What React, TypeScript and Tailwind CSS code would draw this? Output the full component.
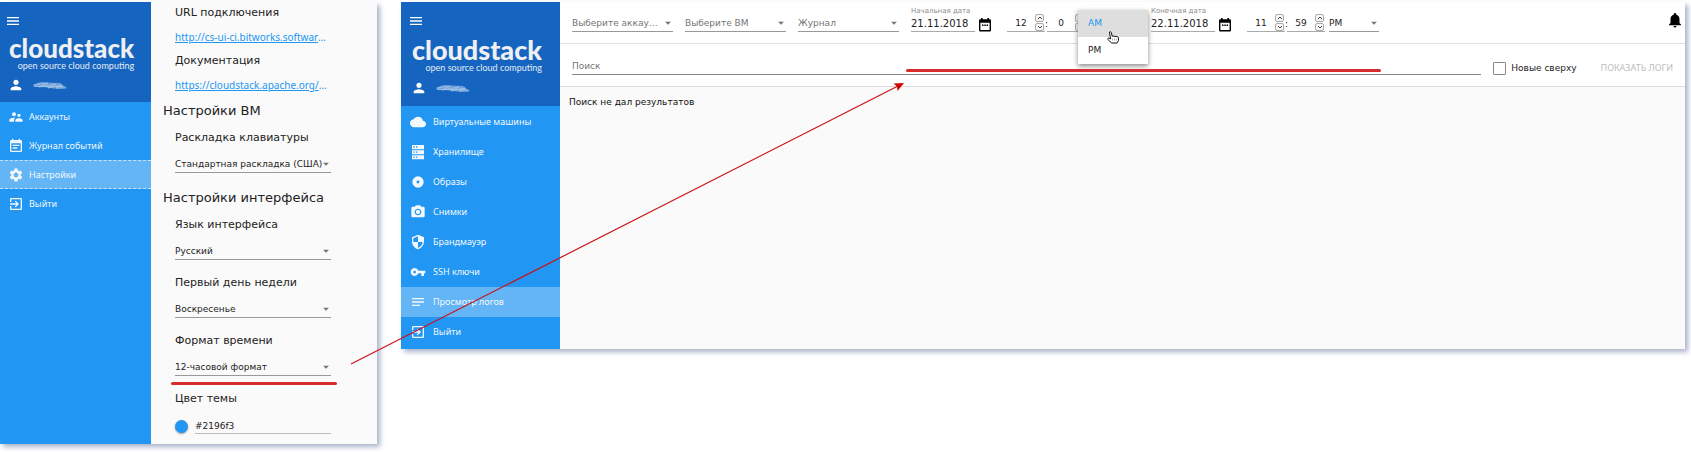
import React from "react";
import type { IconType } from "react-icons";
import {
  MdMenu,
  MdPerson,
  MdSupervisorAccount,
  MdEventNote,
  MdSettings,
  MdExitToApp,
  MdCloud,
  MdCameraAlt,
  MdSecurity,
  MdVpnKey,
  MdNotes,
  MdNotifications,
  MdArrowDropDown,
} from "react-icons/md";

type Glyph = IconType | React.FC<{ className?: string }>;

const ServerIcon: React.FC<{ className?: string }> = ({ className }) => (
  <svg viewBox="0 0 24 24" fill="currentColor" className={className} aria-hidden="true">
    <path
      fillRule="evenodd"
      d="M3 1.500h18V8H3zM3 9.300h18v6H3zM3 16.700h18v6H3zM5 3.500v2h2v-2zM9 3.500v2h2v-2zM5 11.200v2h2v-2zM9 11.200v2h2v-2zM5 18.700v2h2v-2zM9 18.700v2h2v-2z"
    />
  </svg>
);

const DiscIcon: React.FC<{ className?: string }> = ({ className }) => (
  <svg viewBox="0 0 24 24" fill="currentColor" className={className} aria-hidden="true">
    <path fillRule="evenodd" d="M12 3.500a8.500 8.500 0 1 0 0 17 8.500 8.500 0 0 0 0-17zM12 9.800a2.200 2.200 0 1 1 0 4.400 2.200 2.200 0 0 1 0-4.400z" />
  </svg>
);

const CalendarIcon: React.FC<{ className?: string }> = ({ className }) => (
  <svg viewBox="0 0 12 14" className={className} aria-hidden="true">
    <path
      fill="currentColor"
      fillRule="evenodd"
      d="M2 0h1.600v1.300h4.800V0H10v1.300h.8A1.200 1.200 0 0 1 12 2.500v9.800a1.200 1.200 0 0 1-1.200 1.200H1.200A1.200 1.200 0 0 1 0 12.300V2.500a1.200 1.200 0 0 1 1.200-1.200H2zM1.400 4.800v7.300h9.200V4.800zM3 6.600h1.500v1.500H3zM5.300 6.600h1.500v1.500H5.300zM7.600 6.600h1.500v1.500H7.600z"
    />
  </svg>
);

function Sidebar({
  items,
  active,
  wide,
}: {
  items: { label: string; icon: Glyph }[];
  active: string;
  wide?: boolean;
}) {
  return (
    <aside className={`flex shrink-0 flex-col bg-[#2196f3] text-white ${wide ? "w-[159px]" : "w-[151px]"}`}>
      <header className={`flex flex-col bg-[#1565c0] ${wide ? "h-[104px] px-[7px] pt-[11px]" : "h-[100px] px-[5px] pt-[11px]"}`}>
        <button type="button" aria-label="Меню" className="flex h-4 w-4 items-center justify-center">
          <MdMenu className="h-4 w-4" />
        </button>
        <div
          className={`flex w-fit flex-col items-end font-['Lato',sans-serif] ${wide ? "ml-1 mt-2" : "ml-1 mt-[6px]"}`}
        >
          <span className={`font-black leading-[26px] text-[#f0f0f2] ${wide ? "text-[27px]" : "text-[26px]"}`}>
            cloudstack
          </span>
          <span className="whitespace-nowrap text-[9px] leading-[9px] text-[#e3ebf6]">
            open source cloud computing
          </span>
        </div>
        <div className={`flex items-center gap-2 ${wide ? "mt-2 pl-[3px]" : "mt-[7px] pl-[3px]"}`}>
          <MdPerson className="h-4 w-4" />
          <svg viewBox="0 0 36 10" className="h-[10px] w-9" aria-hidden="true">
            <path d="M1 5 Q8 1 14 2.500 L28 3 L35 8 Q25 9.500 18 8 T2 7Z" fill="#8db3e0" opacity=".75" />
            <path d="M2 5l14-2-9 4 17-3-8 4 14-3-6 3 10 0M3 6.500h28" fill="none" stroke="#a9c6e8" strokeWidth=".7" />
          </svg>
        </div>
      </header>
      <nav className={wide ? "pb-[2px] pt-px" : ""}>
        {items.map(({ label, icon: Icon }) => (
          <a
            key={label}
            href="#"
            aria-current={label === active ? "page" : undefined}
            className={`flex items-center font-['Noto_Sans',sans-serif] text-[9px] text-[#f2f8fe] ${
              wide ? "h-[30px] gap-[7px] pl-[9px]" : "h-[29px] gap-[5px] pl-[8px]"
            } ${label === active ? "bg-[#64b5f6]" : ""} ${
              label === active && !wide ? "border-y border-dashed border-[#c5e2fb]" : ""
            }`}
          >
            <Icon className="h-4 w-4 shrink-0" />
            {label}
          </a>
        ))}
      </nav>
    </aside>
  );
}

function Select({
  label,
  value,
  options = [],
  className = "",
  inset = "pr-2",
}: {
  label: string;
  value: string;
  options?: string[];
  className?: string;
  inset?: string;
}) {
  return (
    <div className={`relative border-b border-[#999] ${className}`}>
      <select
        aria-label={label}
        defaultValue={value}
        className={`block h-[15px] w-full appearance-none truncate bg-transparent text-[9px] leading-[15px] outline-none ${inset}`}
      >
        {[value, ...options].map((option) => (
          <option key={option}>{option}</option>
        ))}
      </select>
      <MdArrowDropDown className="pointer-events-none absolute -right-[2px] top-0 h-[14px] w-[14px] text-[#757575]" />
    </div>
  );
}

function Field({ title, children }: { title: string; children: React.ReactNode }) {
  return (
    <section className="relative mb-3 ml-3 w-[156px] last:mb-[10px]">
      <h3 className="mb-2 whitespace-nowrap text-[11px] leading-[22px]">{title}</h3>
      {children}
    </section>
  );
}

function Link({ title, url }: { title: string; url: string }) {
  return (
    <section className="ml-3 w-[156px]">
      <h3 className="text-[11px] leading-[22px]">{title}</h3>
      <p className="truncate font-['Noto_Sans',sans-serif] text-[10px] leading-[26px] text-[#2196f3]">
        <a href={url} className="underline">
          {url}
        </a>
      </p>
    </section>
  );
}

function SettingsPanel() {
  return (
    <div className="flex w-[377px] shrink-0 bg-[#fafafa] shadow-[3px_3px_5px_#a9b3cb]">
      <Sidebar
        active="Настройки"
        items={[
          { label: "Аккаунты", icon: MdSupervisorAccount },
          { label: "Журнал событий", icon: MdEventNote },
          { label: "Настройки", icon: MdSettings },
          { label: "Выйти", icon: MdExitToApp },
        ]}
      />
      <main className="flex-1 pl-3">
        <Link title="URL подключения" url="http://cs-ui-ci.bitworks.software/client" />
        <Link title="Документация" url="https://cloudstack.apache.org/api" />
        <h2 className="mb-[3px] text-[13px] leading-[26px]">Настройки ВМ</h2>
        <Field title="Раскладка клавиатуры">
          <Select label="Раскладка клавиатуры" value="Стандартная раскладка (США)" />
        </Field>
        <h2 className="mb-[3px] text-[13px] leading-[26px]">Настройки интерфейса</h2>
        <Field title="Язык интерфейса">
          <Select label="Язык интерфейса" value="Русский" options={["English"]} />
        </Field>
        <Field title="Первый день недели">
          <Select label="Первый день недели" value="Воскресенье" options={["Понедельник"]} />
        </Field>
        <Field title="Формат времени">
          <Select label="Формат времени" value="12-часовой формат" options={["24-часовой формат"]} />
          <div className="absolute -bottom-[9px] -left-1 h-[3px] w-[166px] rounded-full bg-[#d82c2c]" />
        </Field>
        <Field title="Цвет темы">
          <div className="flex items-center gap-[7px]">
            <button
              type="button"
              aria-label="Выбрать цвет"
              className="h-[13px] w-[13px] rounded-full bg-[#2196f3] shadow-[0_1px_2px_#999]"
            />
            <input
              aria-label="Цвет темы"
              defaultValue="#2196f3"
              className="h-4 min-w-0 flex-1 border-b border-[#bbb] bg-transparent text-[9px] outline-none"
            />
          </div>
        </Field>
      </main>
    </div>
  );
}

function Stepper({ label, value }: { label: string; value: string }) {
  return (
    <div className="flex h-4 w-[38px] items-end border-b border-[#aaa]">
      <input
        aria-label={label}
        inputMode="numeric"
        defaultValue={value}
        className="h-[15px] w-7 min-w-0 bg-transparent text-center text-[9px] leading-[15px] outline-none"
      />
      <div className="flex shrink-0 flex-col gap-px">
        {["Больше", "Меньше"].map((name, i) => (
          <button
            key={name}
            type="button"
            aria-label={`${label}: ${name}`}
            className="flex h-2 w-[9px] items-center justify-center rounded-[2px] border border-[#aaa] bg-[#f8f8f8]"
          >
            <svg viewBox="0 0 6 4" className="h-1 w-[6px]" aria-hidden="true">
              <path d={i === 0 ? "M1 3l2-2 2 2" : "M1 1l2 2 2-2"} fill="none" stroke="#444" />
            </svg>
          </button>
        ))}
      </div>
    </div>
  );
}

function DateField({ label, value }: { label: string; value: string }) {
  return (
    <div className="flex items-end gap-1">
      <label className="w-16 border-b border-[#aaa] text-[#8a8a8a]">
        <span className="block whitespace-nowrap text-[7px] leading-[10px]">{label}</span>
        <input
          defaultValue={value}
          className="block h-[15px] w-full bg-transparent text-[10px] leading-[15px] text-[#222] outline-none"
        />
      </label>
      <button type="button" aria-label={`${label}: календарь`} className="text-black">
        <CalendarIcon className="block h-[14px] w-3" />
      </button>
    </div>
  );
}

function TimeField({ hours, minutes, suffix }: { hours: string; minutes: string; suffix: string }) {
  return (
    <div className="flex items-end text-[9px]">
      <Stepper label={`Часы ${suffix}`} value={hours} />
      <span className="w-[2px] leading-4">:</span>
      <Stepper label={`Минуты ${suffix}`} value={minutes} />
    </div>
  );
}

function PeriodMenu() {
  return (
    <ul
      role="listbox"
      aria-label="Половина дня"
      className="absolute -left-[11px] -top-[6px] z-10 w-[70px] bg-white text-[9px] shadow-[0_2px_5px_#888]"
    >
      <li role="option" aria-selected="true" className="bg-[#dedede] pl-[10px] leading-[27px] text-[#2196f3]">
        AM
      </li>
      <li role="option" aria-selected="false" className="pl-[10px] leading-[27px] text-[#222]">
        PM
      </li>
      <svg viewBox="0 0 12 13" className="absolute left-[29px] top-[21px] h-[13px] w-3" aria-hidden="true">
        <path
          d="M2.500 1c1-.8 1.800 0 2 .8L5 5l5 .6c1 .1 1.500.7 1.500 1.600V9.500L10 12H4.500L1 8.500c-.7-1 .3-1.900 1.200-1.200L3.500 8z"
          fill="#fff"
          stroke="#111"
          strokeWidth="1"
        />
        <path d="M5.500 7.500v2M7.500 7.500v2M9.500 7.500v2" stroke="#777" strokeWidth=".6" />
      </svg>
    </ul>
  );
}

function LogsPanel() {
  return (
    <div className="flex min-w-0 flex-1 self-start bg-[#fafafa] shadow-[3px_3px_5px_#a9b3cb]">
      <Sidebar
        wide
        active="Просмотр логов"
        items={[
          { label: "Виртуальные машины", icon: MdCloud },
          { label: "Хранилище", icon: ServerIcon },
          { label: "Образы", icon: DiscIcon },
          { label: "Снимки", icon: MdCameraAlt },
          { label: "Брандмауэр", icon: MdSecurity },
          { label: "SSH ключи", icon: MdVpnKey },
          { label: "Просмотр логов", icon: MdNotes },
          { label: "Выйти", icon: MdExitToApp },
        ]}
      />
      <main className="min-w-0 flex-1">
        <div className="flex h-[42px] items-end border-b border-[#e0e0e0] bg-white pb-[11px] pl-3 pr-px">
          <div className="flex gap-3 text-[#757575]">
            <Select label="Аккаунт" value="Выберите аккаунты" className="w-[101px]" inset="pr-3" />
            <Select label="Виртуальная машина" value="Выберите ВМ" className="w-[101px]" inset="pr-3" />
            <Select label="Тип журнала" value="Журнал" className="w-[101px]" inset="pr-3" />
          </div>
          <div className="ml-3 flex items-end gap-4">
            <DateField label="Начальная дата" value="21.11.2018" />
            <TimeField hours="12" minutes="0" suffix="начала" />
          </div>
          <div className="relative ml-1 w-[50px]">
            <Select label="Половина дня начала" value="AM" options={["PM"]} />
            <PeriodMenu />
          </div>
          <div className="ml-3 flex items-end gap-4">
            <DateField label="Конечная дата" value="22.11.2018" />
            <TimeField hours="11" minutes="59" suffix="конца" />
          </div>
          <Select label="Половина дня конца" value="PM" options={["AM"]} className="ml-1 w-[50px]" />
          <button type="button" aria-label="Уведомления" className="ml-auto mt-[9px] self-start text-black">
            <MdNotifications className="h-[18px] w-[18px]" />
          </button>
        </div>
        <div className="flex h-[43px] items-end border-b border-[#ddd] bg-white px-3 pb-[11px]">
          <div className="relative flex min-w-0 flex-1">
            <input
              aria-label="Поиск"
              placeholder="Поиск"
              className="h-[18px] w-full border-b border-[#888] bg-transparent text-[9px] outline-none placeholder:text-[#757575]"
            />
            <div className="absolute bottom-[3px] left-[334px] h-[3px] w-[475px] rounded-full bg-[#d82c2c]" />
          </div>
          <label className="ml-3 flex items-center gap-[5px] text-[9px]">
            <input
              type="checkbox"
              className="h-[13px] w-[13px] appearance-none rounded-[1px] border border-[#888] bg-white"
            />
            Новые сверху
          </label>
          <button
            type="button"
            disabled
            className="ml-6 whitespace-nowrap font-['Noto_Sans',sans-serif] text-[9px] leading-[14px] text-[#bdbdbd]"
          >
            ПОКАЗАТЬ ЛОГИ
          </button>
        </div>
        <p className="px-[9px] pt-2 text-[9px] leading-[15px] text-[#111]">Поиск не дал результатов</p>
      </main>
    </div>
  );
}

export default function App() {
  return (
    <div className="relative flex min-h-screen items-start gap-6 bg-white pr-[6px] pt-[2px] font-['DejaVu_Sans',sans-serif] text-[#222]">
      <SettingsPanel />
      <LogsPanel />
      <svg
        viewBox="0 0 560 290"
        className="pointer-events-none absolute left-[350px] top-[80px] h-[290px] w-[560px]"
        aria-hidden="true"
      >
        <path d="M1 284L548 6" stroke="#c8141a" strokeWidth="1.200" />
        <path d="M554 3L547.500 11 547 6.500 543.500 3.500z" fill="#d00000" />
      </svg>
    </div>
  );
}
